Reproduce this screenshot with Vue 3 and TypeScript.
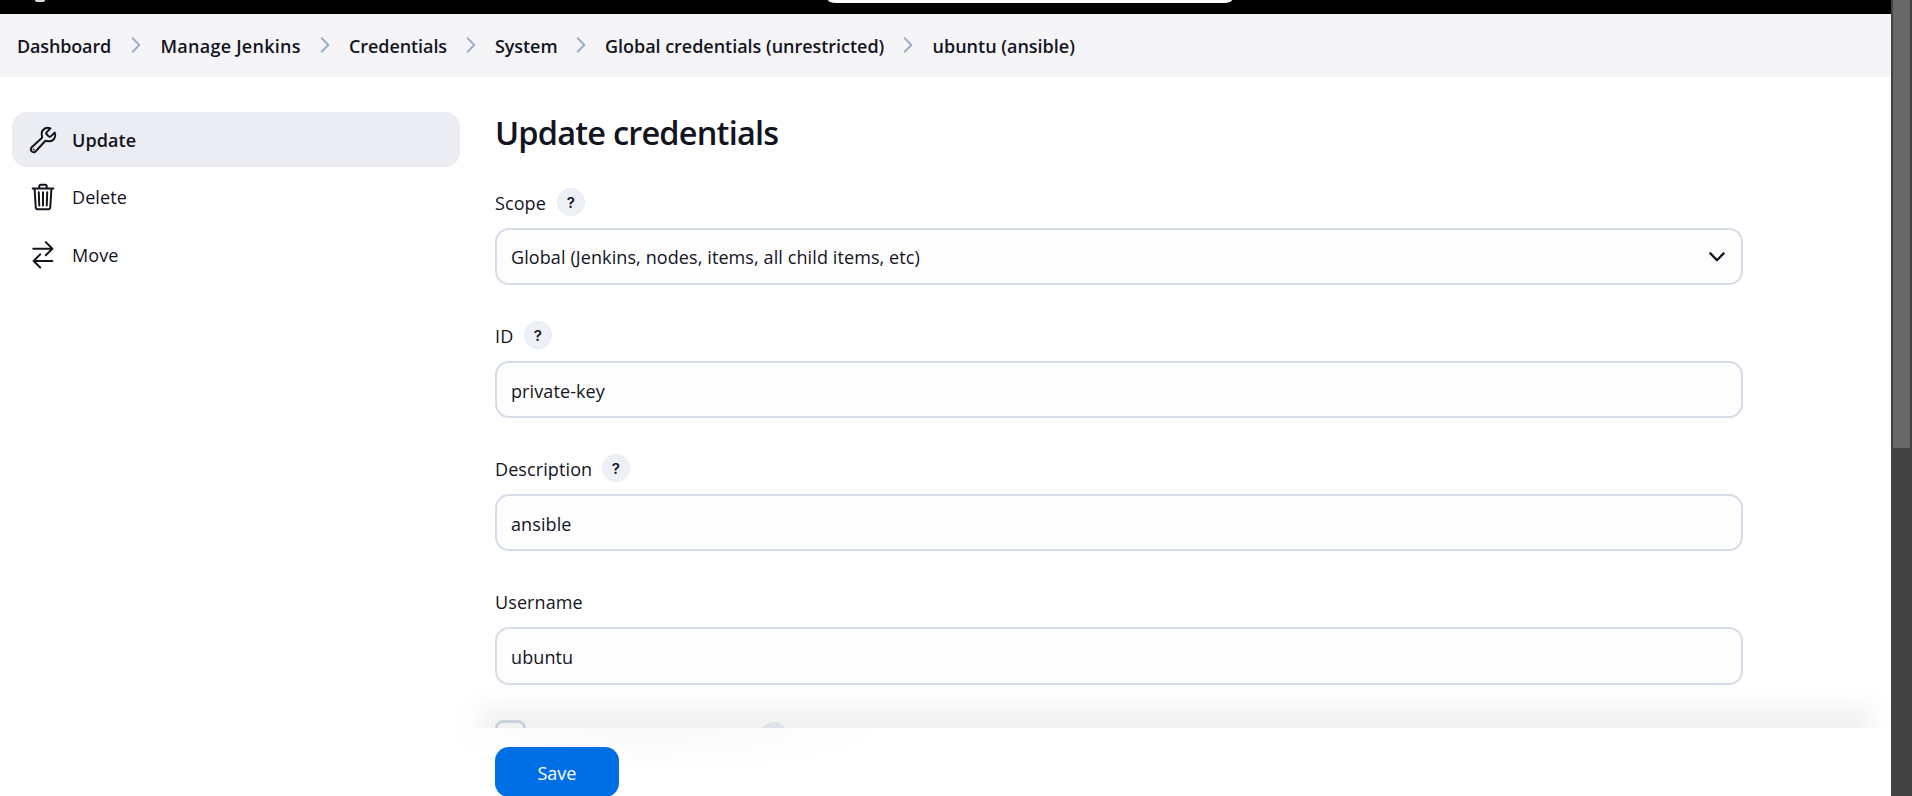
<script setup lang="ts">
interface Crumb { text: string; width: number; spacing: number }
interface Field { label: string; value: string; help: boolean; select?: boolean; labelWidth: number }

const crumbs: Crumb[] = [
  { text: 'Dashboard', width: 94.5, spacing: -0.15 },
  { text: 'Manage Jenkins', width: 139.5, spacing: 0.25 },
  { text: 'Credentials', width: 97, spacing: -0.08 },
  { text: 'System', width: 61, spacing: -0.08 },
  { text: 'Global credentials (unrestricted)', width: 278.5, spacing: -0.03 },
  { text: 'ubuntu (ansible)', width: 144, spacing: 0 },
]

const fields: Field[] = [
  { label: 'Scope', value: 'Global (Jenkins, nodes, items, all child items, etc)', help: true, select: true, labelWidth: 52 },
  { label: 'ID', value: 'private-key', help: true, labelWidth: 19 },
  { label: 'Description', value: 'ansible', help: true, labelWidth: 97 },
  { label: 'Username', value: 'ubuntu', help: false, labelWidth: 86 },
]
</script>

<template>
  <div class="page">
    <div class="view">
      <header class="topbar">
        <span class="logo-edge"></span>
        <span class="search-edge"></span>
      </header>
      <nav class="crumbs">
        <template v-for="(c, i) in crumbs" :key="c.text">
          <svg v-if="i > 0" class="sep" viewBox="0 0 10 16"><path d="M1.7 1.3 8.3 8l-6.6 6.7" /></svg>
          <a class="crumb" :style="{ width: c.width + 'px', letterSpacing: c.spacing + 'px' }">{{ c.text }}</a>
        </template>
      </nav>
      <div class="body">
        <aside class="side">
          <a class="task active">
            <svg class="icon" viewBox="0 0 512 512"><path d="M393.87 190a32.1 32.1 0 0 1-45.25 0l-26.57-26.57a32.09 32.09 0 0 1 0-45.26L382.19 58a1 1 0 0 0-.3-1.64c-38.82-16.64-89.15-8.16-121.11 23.57-30.58 30.35-32.32 76-21.12 115.84a31.93 31.93 0 0 1-9.06 32.08L64 380a48.17 48.17 0 1 0 68 68l153.86-167a31.93 31.93 0 0 1 31.6-9.13c39.54 10.59 84.54 8.6 114.72-21.19 32.49-32 39.5-88.56 23.75-120.93a1 1 0 0 0-1.6-.26z" /><circle class="dot" cx="96" cy="416" r="16" /></svg>
            <span>Update</span>
          </a>
          <a class="task">
            <svg class="icon" viewBox="0 0 512 512"><path d="m112 112 20 320c.95 18.49 14.4 32 32 32h184c17.67 0 30.87-13.51 32-32l20-320M80 112h352M192 112V72a23.93 23.93 0 0 1 24-24h80a23.93 23.93 0 0 1 24 24v40M256 176v224M184 176l8 224M328 176l-8 224" /></svg>
            <span>Delete</span>
          </a>
          <a class="task">
            <svg class="icon" viewBox="0 0 512 512"><path d="m304 36 112 112-112 112M400 148H90M208 470 96 358l112-112M106 358h310" /></svg>
            <span>Move</span>
          </a>
        </aside>
        <main class="main">
          <h1 class="title">Update credentials</h1>
          <section v-for="f in fields" :key="f.label" class="field">
            <div class="label-row">
              <label class="label" :style="{ width: f.labelWidth + 'px' }">{{ f.label }}</label>
              <span v-if="f.help" class="help">?</span>
            </div>
            <div class="input" :class="{ choice: f.select }">
              <span>{{ f.value }}</span>
              <svg v-if="f.select" class="chev" viewBox="0 0 16 10"><path d="m1.4 1.4 6.600 6.800 6.600-6.800" /></svg>
            </div>
          </section>
          <div class="secret-row">
            <span class="checkbox"></span>
            <span class="help"></span>
          </div>
        </main>
      </div>
      <div class="shade"></div>
      <footer class="bottom">
        <button class="save">Save</button>
      </footer>
    </div>
    <div class="scrollbar"><div class="thumb"></div></div>
  </div>
</template>

<style>
body { margin: 0; overflow: hidden; }
</style>

<style scoped>
* { box-sizing: border-box; }
.page { display: flex; height: 796px; overflow: hidden; background: #fff; color: #14141f; font-family: "Open Sans", "Noto Sans", sans-serif; font-size: 18px; letter-spacing: 0.1px; }
.view { position: relative; width: 1891px; height: 796px; overflow: hidden; }
.topbar { height: 14px; background: #000; display: flex; }
.logo-edge { width: 10px; height: 2px; margin-left: 35px; background: #ddd; border-radius: 0 0 4px 4px; }
.search-edge { width: 404px; height: 3px; margin-left: 783px; background: #fff; border-radius: 0 0 8px 8px / 0 0 3px 3px; }
.crumbs { height: 63px; background: #f5f5f8; display: flex; align-items: center; padding-left: 17px; }
.crumb { flex: none; white-space: nowrap; font-weight: 600; line-height: 24px; }
.sep { width: 10px; height: 16px; margin: 0 19.5px; flex: none; position: relative; top: -1px; }
.sep path { fill: none; stroke: #9ab0ca; stroke-width: 2; stroke-linecap: round; stroke-linejoin: round; }
.body { display: flex; padding-left: 12px; }
.side { width: 448px; padding-top: 35px; display: flex; flex-direction: column; gap: 2.5px; }
.task { height: 55px; border-radius: 15px; display: flex; align-items: center; padding-left: 16px; gap: 14px; }
.task.active { background: #ecedf3; font-weight: 600; }
.icon { width: 30px; height: 30px; flex: none; }
.icon path { fill: none; stroke: #14141f; stroke-width: 34; stroke-linecap: round; stroke-linejoin: round; }
.dot { fill: #14141f; }
.main { margin-left: 35px; width: 1248px; padding-top: 34px; }
.title { margin: 0; font-size: 32.5px; line-height: 43px; height: 77px; font-weight: 570; white-space: nowrap; letter-spacing: -0.8px; }
.field { height: 133.1px; }
.label-row { height: 28px; display: flex; align-items: center; margin-bottom: 12px; gap: 10px; }
.label { white-space: nowrap; padding-top: 1px; }
.help { width: 28px; height: 28px; flex: none; border-radius: 50%; background: #edf1f5; border: 1px solid #e6ebf1; display: flex; align-items: center; justify-content: center; font: 600 15px/1 Inter, sans-serif; }
.input { height: 57.3px; border: 2px solid #d6dde8; border-radius: 14px; background: #fdfdfd; display: flex; align-items: center; justify-content: space-between; padding: 2px 16px 0 14px; white-space: nowrap; }
.input.choice { padding-top: 0; }
.chev { width: 16px; height: 10px; }
.chev path { fill: none; stroke: #14141f; stroke-width: 2.3; stroke-linecap: round; stroke-linejoin: round; }
.secret-row { display: flex; align-items: flex-start; }
.checkbox { width: 31px; height: 31px; border: 3px solid #d6dde8; border-radius: 8px; }
.secret-row .help { margin: 2px 0 0 234px; }
.shade { position: absolute; left: 455px; right: 0; top: 685px; height: 43px; overflow: hidden; }
.shade::after { content: ""; position: absolute; left: 25px; right: 21px; top: 21px; height: 100px; background: rgba(0, 0, 0, 0.054); filter: blur(12px); }
.bottom { position: absolute; left: 460px; right: 0; top: 728px; height: 68px; padding: 19px 0 0 35px; background: radial-gradient(ellipse 240px 46px at 190px 0, #f9f9f9, #fff); }
.save { width: 124px; height: 50px; border: 0; padding: 2px 0 0; border-radius: 14px; background: #006fe6; color: #fff; font: 500 18px "Open Sans", "Noto Sans", sans-serif; }
.scrollbar { width: 21px; height: 796px; background: #424242; padding-left: 2px; }
.thumb { width: 17px; height: 448px; background: #686868; }
</style>
